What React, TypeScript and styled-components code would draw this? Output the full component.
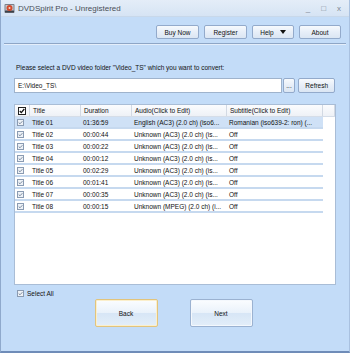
import { FC } from "react";
import styled, { createGlobalStyle } from "styled-components";

const GlobalStyle = createGlobalStyle`
  html, body {
    margin: 0;
    padding: 0;
    background: #c3dcf8;
  }
  * { box-sizing: border-box; }
`;

const FONT = `"Liberation Sans", Arial, sans-serif`;

// styled components
const Window = styled.div`
  width: 350px;
  height: 353px;
  display: flex;
  flex-direction: column;
  background: #c3dcf8;
  border-left: 1px solid #8fa9cc;
  border-right: 1px solid #a9c1e0;
  border-bottom: 2px solid #6f8cb8;
  font-family: ${FONT};
  font-size: 6.5px;
  color: #111;
  overflow: hidden;
`;

const TitleBar = styled.div`
  height: 17px;
  display: flex;
  align-items: center;
  padding: 0 8px 0 3px;
  background: linear-gradient(#e4edf8, #d6e4f4);
  border-bottom: 1px solid #c8d8ea;
`;

const TitleText = styled.span`
  margin-left: 3px;
  font-size: 8px;
  color: #4a4f57;
  flex: 1;
`;

const WinControls = styled.div`
  display: flex;
  gap: 11px;
  align-items: center;
  color: #7d8794;
  font-size: 8px;
`;

const Toolbar = styled.div`
  height: 26px;
  display: flex;
  justify-content: flex-end;
  align-items: flex-start;
  gap: 5px;
  padding: 8px 8px 0 0;
`;

const ToolButton = styled.button<{ $w: number }>`
  width: ${(p) => p.$w}px;
  height: 14px;
  padding: 0;
  display: flex;
  align-items: center;
  justify-content: center;
  gap: 6px;
  font-family: ${FONT};
  font-size: 6.5px;
  color: #111;
  background: linear-gradient(#f7fafd, #e7eef8 50%, #dbe6f3);
  border: 1px solid #93aacb;
  border-radius: 2px;
`;

const Separator = styled.div`
  margin: 0 3px;
  height: 2px;
  border-top: 1px solid #8ea6c6;
  border-bottom: 1px solid #e4eefb;
`;

const Content = styled.div`
  flex: 1;
  display: flex;
  flex-direction: column;
  padding: 17px 14px 0 13px;
`;

const Label = styled.div`
  height: 12px;
  line-height: 12px;
  margin-left: 2px;
`;

const PathRow = styled.div`
  display: flex;
  margin-top: 4px;
  gap: 1px;
  height: 15px;
`;

const PathInput = styled.div`
  width: 271px;
  height: 15px;
  background: #fff;
  border: 1px solid #9fb3cc;
  padding-left: 3px;
  line-height: 13px;
`;

const SmallButton = styled(ToolButton)`
  height: 15px;
  margin-left: ${(p) => (p.$w > 20 ? 2 : 0)}px;
`;

const Table = styled.div`
  margin-top: 11px;
  width: 322px;
  height: 181px;
  background: #fff;
  border: 1px solid #a9bdd6;
`;

const COLS = "15px 51px 51px 95px 96px 12px";

const HeaderRow = styled.div`
  display: grid;
  grid-template-columns: ${COLS};
  height: 12px;
  background: linear-gradient(#fbfcfe, #eef1f6);
  border-bottom: 1px solid #d5dde8;
`;

const HeaderCell = styled.div`
  display: flex;
  align-items: center;
  padding-left: 3px;
  border-right: 1px solid #d2d9e3;
  white-space: nowrap;
  overflow: hidden;
`;

const Row = styled.div<{ $selected?: boolean }>`
  display: grid;
  grid-template-columns: 15px 51px 51px 95px 96px;
  width: 308px;
  height: 12px;
  background: ${(p) => (p.$selected ? "#cfe1f6" : "#fff")};
  border-bottom: 2px solid #c6d9ef;
`;

const Cell = styled.div`
  display: flex;
  align-items: center;
  padding-left: 2px;
  white-space: nowrap;
  overflow: hidden;
`;

const CheckCell = styled.div`
  display: flex;
  align-items: center;
  padding-left: 2px;
`;

const SelectAll = styled.label`
  display: flex;
  align-items: center;
  gap: 3px;
  margin: 4px 0 0 3px;
  height: 9px;
`;

const Footer = styled.div`
  display: flex;
  justify-content: center;
  gap: 32px;
  margin-top: 1px;
  padding-right: 2px;
`;

const BigButton = styled.button<{ $focus?: boolean }>`
  width: 63px;
  height: 28px;
  font-family: ${FONT};
  font-size: 6.5px;
  color: #111;
  border-radius: 2px;
  border: 1px solid ${(p) => (p.$focus ? "#e2c47c" : "#9bb2d1")};
  background: linear-gradient(#fbfdff, #eaf2fb 48%, #d7e6f6 52%, #e3eef9);
  box-shadow: inset 0 0 0 1px ${(p) => (p.$focus ? "#fbefcc" : "#f4f8fd")};
`;

// icons
const AppIcon: FC = () => (
  <svg width="11" height="11" viewBox="0 0 11 11">
    <rect x="0.5" y="1" width="10" height="9" rx="1" fill="#7a7f88" />
    <rect x="1.5" y="2" width="8" height="5" fill="#c6cbd2" />
    <circle cx="5.5" cy="5" r="3" fill="#d34a2c" />
    <circle cx="5.5" cy="5" r="1" fill="#f4d8c8" />
    <rect x="1" y="8" width="9" height="1.5" fill="#3d4148" />
  </svg>
);

const CheckBox: FC<{ strong?: boolean }> = ({ strong }) =>
  strong ? (
    <svg width="8" height="8" viewBox="0 0 8 8">
      <rect x="0.5" y="0.5" width="7" height="7" fill="#fff" stroke="#222" />
      <path d="M1.8 4 L3.3 5.6 L6.3 2" fill="none" stroke="#111" strokeWidth="1.3" />
    </svg>
  ) : (
    <svg width="7" height="7" viewBox="0 0 7 7">
      <rect x="0.5" y="0.5" width="6" height="6" fill="#eef2f7" stroke="#8a9bb2" />
      <path d="M1.7 3.5 L3 4.8 L5.4 2.2" fill="none" stroke="#6f7f94" strokeWidth="0.9" />
    </svg>
  );

const DownArrow: FC = () => (
  <svg width="6" height="4" viewBox="0 0 6 4">
    <path d="M0 0 H6 L3 4 Z" fill="#111" />
  </svg>
);

type Title = { name: string; duration: string; audio: string; subtitle: string };

const titles: Title[] = [
  { name: "Title 01", duration: "01:36:59", audio: "English (AC3) (2.0 ch) (iso6...", subtitle: "Romanian (iso639-2: ron) (..." },
  { name: "Title 02", duration: "00:00:44", audio: "Unknown (AC3) (2.0 ch) (is...", subtitle: "Off" },
  { name: "Title 03", duration: "00:00:22", audio: "Unknown (AC3) (2.0 ch) (is...", subtitle: "Off" },
  { name: "Title 04", duration: "00:00:12", audio: "Unknown (AC3) (2.0 ch) (is...", subtitle: "Off" },
  { name: "Title 05", duration: "00:02:29", audio: "Unknown (AC3) (2.0 ch) (is...", subtitle: "Off" },
  { name: "Title 06", duration: "00:01:41", audio: "Unknown (AC3) (2.0 ch) (is...", subtitle: "Off" },
  { name: "Title 07", duration: "00:00:35", audio: "Unknown (AC3) (2.0 ch) (is...", subtitle: "Off" },
  { name: "Title 08", duration: "00:00:15", audio: "Unknown (MPEG) (2.0 ch) (i...", subtitle: "Off" },
];

const App: FC = () => (
  <>
    <GlobalStyle />
    <Window>
      <TitleBar>
        <AppIcon />
        <TitleText>DVDSpirit Pro - Unregistered</TitleText>
        <WinControls>
          <span>_</span>
          <span>□</span>
          <span>x</span>
        </WinControls>
      </TitleBar>

      <Toolbar>
        <ToolButton $w={43}>Buy Now</ToolButton>
        <ToolButton $w={43}>Register</ToolButton>
        <ToolButton $w={42}>
          Help <DownArrow />
        </ToolButton>
        <ToolButton $w={42}>About</ToolButton>
      </Toolbar>
      <Separator />

      <Content>
        <Label>Please select a DVD video folder "Video_TS" which you want to convert:</Label>
        <PathRow>
          <PathInput>E:\Video_TS\</PathInput>
          <SmallButton $w={13}>...</SmallButton>
          <SmallButton $w={37}>Refresh</SmallButton>
        </PathRow>

        <Table>
          <HeaderRow>
            <HeaderCell>
              <CheckBox strong />
            </HeaderCell>
            <HeaderCell>Title</HeaderCell>
            <HeaderCell>Duration</HeaderCell>
            <HeaderCell>Audio(Click to Edit)</HeaderCell>
            <HeaderCell>Subtitle(Click to Edit)</HeaderCell>
            <HeaderCell />
          </HeaderRow>
          {titles.map((t, i) => (
            <Row key={t.name} $selected={i === 0}>
              <CheckCell>
                <CheckBox />
              </CheckCell>
              <Cell>{t.name}</Cell>
              <Cell>{t.duration}</Cell>
              <Cell>{t.audio}</Cell>
              <Cell>{t.subtitle}</Cell>
            </Row>
          ))}
        </Table>

        <SelectAll>
          <CheckBox />
          Select All
        </SelectAll>

        <Footer>
          <BigButton $focus>Back</BigButton>
          <BigButton>Next</BigButton>
        </Footer>
      </Content>
    </Window>
  </>
);

export default App;
